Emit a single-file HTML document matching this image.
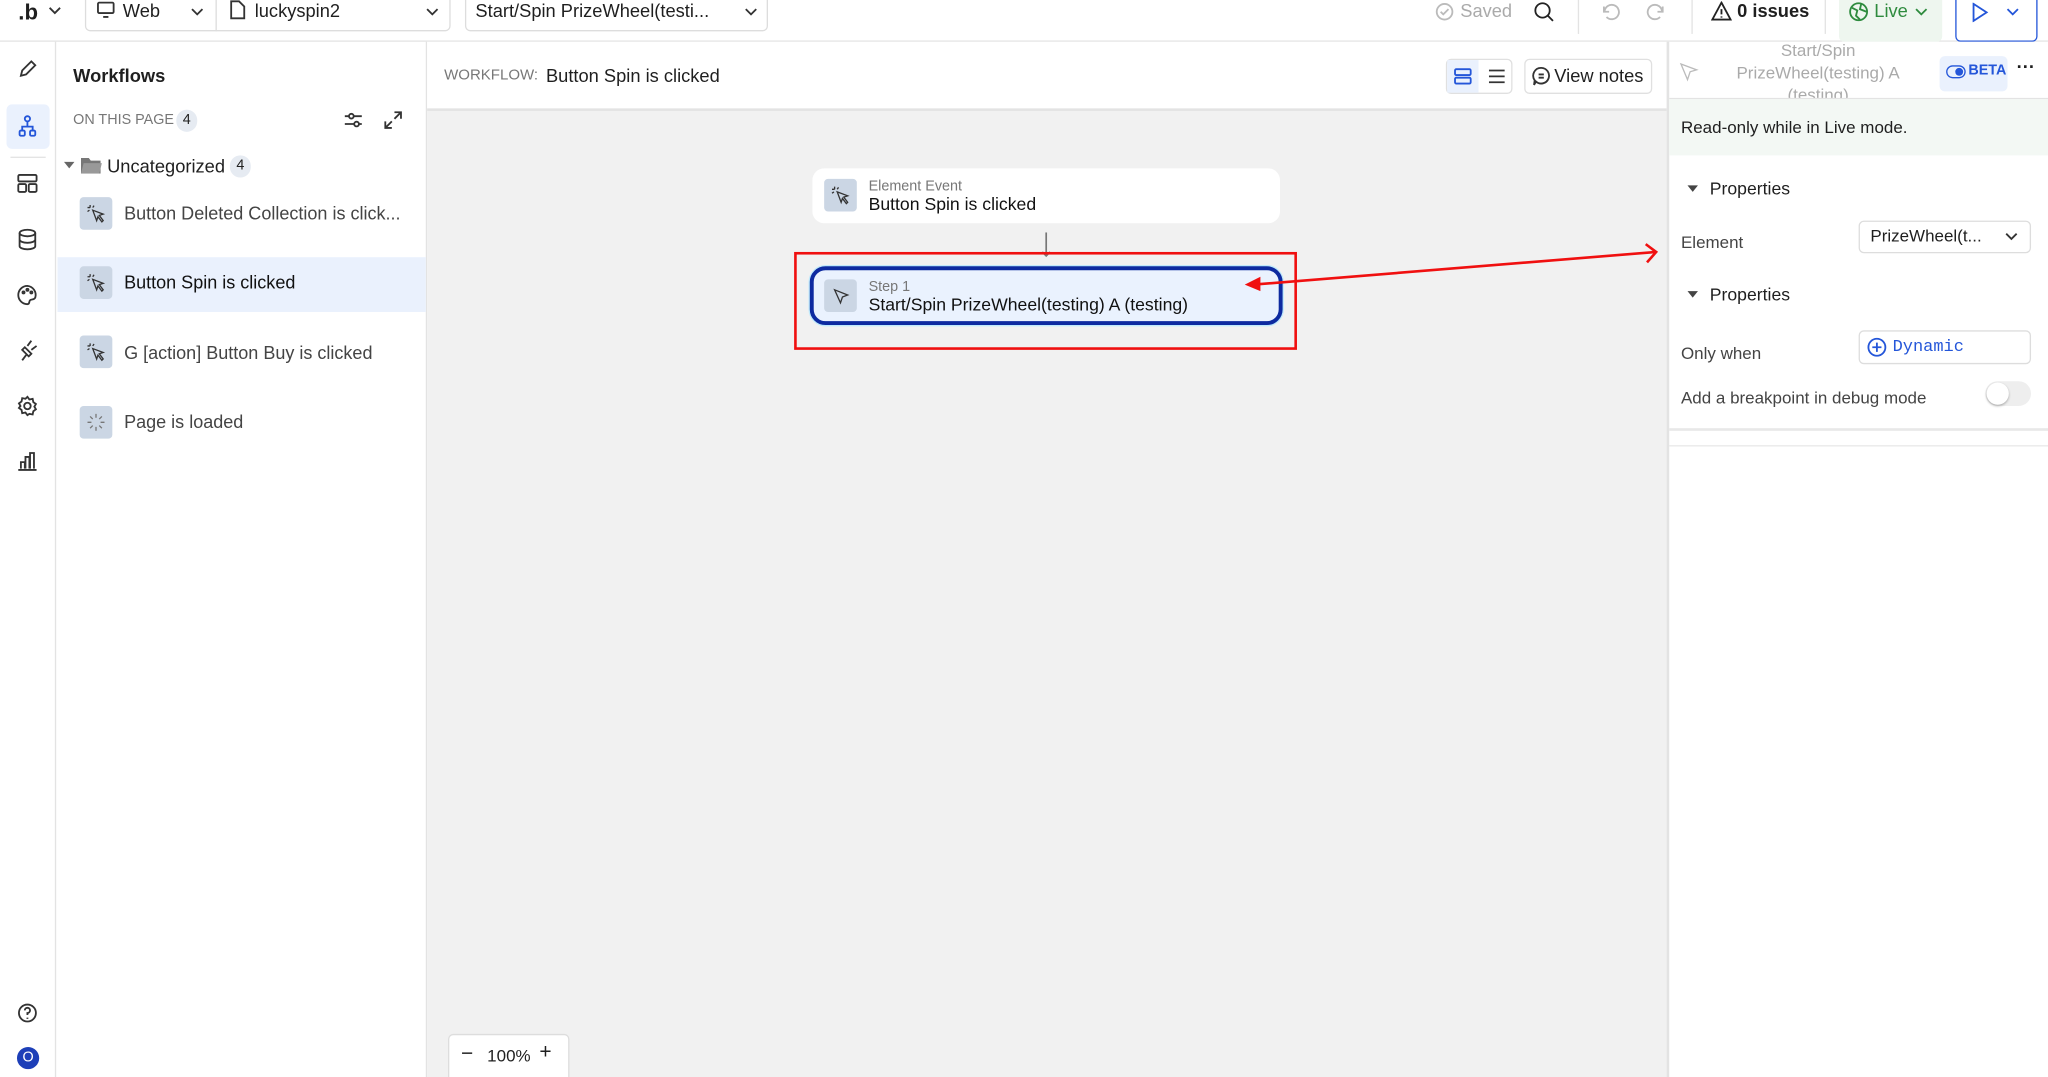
<!DOCTYPE html>
<html><head><meta charset="utf-8"><style>
*{box-sizing:border-box;margin:0;padding:0}
html,body{width:2048px;height:1077px;overflow:hidden;background:#fff}
#w{position:absolute;left:0;top:0;width:1568px;height:825px;overflow:hidden;transform:scale(1.30612,1.30545);transform-origin:0 0;font-family:"Liberation Sans",sans-serif;color:#1f1f1f;font-size:13px}
.a{position:absolute}
.ic{position:absolute;stroke:#333;fill:none;stroke-width:1.4}
.t{position:absolute;white-space:nowrap}
.sq{position:absolute;width:25px;height:25px;background:#cbd6e4;border-radius:3px}
</style></head><body><div id="w">
<!-- top bar -->
<div class="a" style="left:0;top:0;width:1568px;height:32px;background:#fff;border-bottom:1px solid #e3e3e3"></div>
<div class="t" style="left:14px;top:0;font-size:17px;font-weight:bold">.b</div>
<svg class="ic" style="left:37px;top:4px" width="10" height="8"><path d="M1 2l4 4 4-4"/></svg>
<div class="a" style="left:65px;top:-4px;width:280px;height:28px;border:1px solid #ddd;border-radius:4px"></div>
<div class="a" style="left:165px;top:-4px;width:1px;height:28px;background:#ddd"></div>
<svg class="ic" style="left:74px;top:1px" width="14" height="13"><rect x="1" y="1" width="12" height="8" rx="1"/><path d="M5 12h4"/></svg>
<div class="t" style="left:94px;top:0;font-size:14px">Web</div>
<svg class="ic" style="left:146px;top:5px" width="10" height="8"><path d="M1 2l4 4 4-4"/></svg>
<svg class="ic" style="left:176px;top:0" width="12" height="15"><path d="M1 1h6l4 4v9H1z"/></svg>
<div class="t" style="left:195px;top:0;font-size:14px">luckyspin2</div>
<svg class="ic" style="left:326px;top:5px" width="10" height="8"><path d="M1 2l4 4 4-4"/></svg>
<div class="a" style="left:356px;top:-4px;width:232px;height:28px;border:1px solid #ddd;border-radius:4px"></div>
<div class="t" style="left:364px;top:0;font-size:14px">Start/Spin PrizeWheel(testi...</div>
<svg class="ic" style="left:570px;top:5px" width="10" height="8"><path d="M1 2l4 4 4-4"/></svg>
<svg class="ic" style="left:1099px;top:2px;stroke:#bbb" width="14" height="14"><circle cx="7" cy="7" r="6"/><path d="M4 7l2 2 4-4"/></svg>
<div class="t" style="left:1118px;top:0;font-size:14px;color:#aaa">Saved</div>
<svg class="ic" style="left:1174px;top:1px;stroke:#222" width="16" height="16"><circle cx="7" cy="7" r="5.5"/><path d="M11 11l4 4"/></svg>
<div class="a" style="left:1208px;top:0;width:1px;height:26px;background:#e3e3e3"></div>
<svg class="ic" style="left:1225px;top:1px;stroke:#bbb" width="16" height="16"><path d="M3 4v4h4M3.5 8A5.5 5.5 0 1 1 5 12"/></svg>
<svg class="ic" style="left:1260px;top:1px;stroke:#bbb" width="16" height="16"><path d="M13 4v4H9M12.5 8A5.5 5.5 0 1 0 11 12"/></svg>
<div class="a" style="left:1295px;top:0;width:1px;height:26px;background:#e3e3e3"></div>
<svg class="ic" style="left:1310px;top:1px;stroke:#222" width="16" height="15"><path d="M8 1L15 14H1z M8 6v4 M8 11.5v1"/></svg>
<div class="t" style="left:1330px;top:0;font-size:14px;font-weight:bold">0 issues</div>
<div class="a" style="left:1397px;top:0;width:1px;height:26px;background:#e3e3e3"></div>
<div class="a" style="left:1408px;top:-4px;width:79px;height:36px;background:#eef6ef;border-radius:4px"></div>
<svg class="ic" style="left:1415px;top:1px;stroke:#2e8b3e" width="16" height="16"><circle cx="8" cy="8" r="6.5"/><path d="M3 5l4 2-1 4 3 3M10 2l-1 4 5 2"/></svg>
<div class="t" style="left:1435px;top:0;font-size:14px;color:#2e8b3e">Live</div>
<svg class="ic" style="left:1466px;top:5px;stroke:#2e8b3e" width="10" height="8"><path d="M1 2l4 4 4-4"/></svg>
<div class="a" style="left:1497px;top:-4px;width:63px;height:36px;border:1.5px solid #2456d9;border-radius:4px"></div>
<svg class="ic" style="left:1509px;top:2px;stroke:#2456d9" width="14" height="15"><path d="M2 1l10 6.5L2 14z"/></svg>
<svg class="ic" style="left:1536px;top:5px;stroke:#2456d9" width="10" height="8"><path d="M1 2l4 4 4-4"/></svg>
<!-- left rail -->
<div class="a" style="left:0;top:32px;width:43px;height:793px;border-right:1px solid #e3e3e3"></div>
<svg class="ic" style="left:13px;top:45px" width="16" height="16"><path d="M3 13l1-4 7-7 3 3-7 7z"/></svg>
<div class="a" style="left:5px;top:80px;width:33px;height:34px;background:#eaf1fd;border-radius:4px"></div>
<svg class="ic" style="left:13px;top:88px;stroke:#2456d9" width="16" height="18"><circle cx="8" cy="3" r="2"/><path d="M8 5v4M4 12V9h8v3"/><rect x="2" y="12" width="4" height="4" rx="1"/><rect x="10" y="12" width="4" height="4" rx="1"/></svg>
<div class="a" style="left:8px;top:120px;width:27px;height:1px;background:#e3e3e3"></div>
<svg class="ic" style="left:13px;top:132px" width="16" height="16"><rect x="1" y="2" width="14" height="5" rx="1"/><rect x="1" y="9" width="6" height="6" rx="1"/><rect x="9" y="9" width="6" height="6" rx="1"/></svg>
<svg class="ic" style="left:13px;top:175px" width="16" height="17"><ellipse cx="8" cy="3.5" rx="6" ry="2.5"/><path d="M2 3.5v10c0 1.4 2.7 2.5 6 2.5s6-1.1 6-2.5v-10M2 8.5c0 1.4 2.7 2.5 6 2.5s6-1.1 6-2.5"/></svg>
<svg class="ic" style="left:13px;top:218px" width="16" height="16"><path d="M8 1a7 7 0 0 0 0 14c2 0 1-2 2-3s3 0 4-2A7 7 0 0 0 8 1z"/><circle cx="5" cy="6" r=".8"/><circle cx="8" cy="4" r=".8"/><circle cx="11" cy="6" r=".8"/></svg>
<svg class="ic" style="left:13px;top:260px" width="16" height="17"><path d="M4 16l3-4M6 6l5 5-2 2-5-5zM8 5l3-4M11 8l4-3"/></svg>
<svg class="ic" style="left:13px;top:303px" width="16" height="16"><circle cx="8" cy="8" r="2.5"/><path d="M8 1l1.5 2 2.5-.5.5 2.5 2 1.5-1.2 2 1.2 2-2 1.5-.5 2.5-2.5-.5L8 15l-1.5-2-2.5.5-.5-2.5-2-1.5L2.7 8 1.5 6l2-1.5.5-2.5 2.5.5z"/></svg>
<svg class="ic" style="left:13px;top:345px" width="16" height="16"><path d="M1 15h14M3 14V9h3v5M6.5 14V5h3v9M10 14V2h3v12"/></svg>
<svg class="ic" style="left:13px;top:768px" width="16" height="16"><circle cx="8" cy="8" r="6.5"/><path d="M6 6a2 2 0 1 1 2 2v1.5M8 11.5v1"/></svg>
<div class="a" style="left:13px;top:802px;width:17px;height:17px;border-radius:50%;background:#1d3fb8;color:#fff;font-size:11px;text-align:center;line-height:17px">O</div>
<!-- sidebar -->
<div class="a" style="left:43px;top:32px;width:284px;height:793px;border-right:1px solid #e3e3e3"></div>
<div class="t" style="left:56px;top:50px;font-size:14px;font-weight:bold">Workflows</div>
<div class="t" style="left:56px;top:86px;font-size:11px;color:#777">ON THIS PAGE</div>
<div class="a" style="left:135px;top:84px;width:16px;height:17px;border-radius:8px;background:#e6ebf2;font-size:11px;text-align:center;line-height:17px">4</div>
<svg class="ic" style="left:263px;top:85px" width="15" height="14"><path d="M1 4h13M1 10h13"/><circle cx="6" cy="4" r="1.8" fill="#fff"/><circle cx="10" cy="10" r="1.8" fill="#fff"/></svg>
<svg class="ic" style="left:294px;top:85px" width="14" height="14"><path d="M8 1h5v5M13 1L8 6M6 13H1V8M1 13l5-5"/></svg>
<div class="a" style="left:49px;top:124px;width:0;height:0;border-left:4px solid transparent;border-right:4px solid transparent;border-top:5px solid #666"></div>
<svg class="a" style="left:62px;top:120px" width="16" height="13"><path d="M0 1h6l1.5 2H15v10H0z" fill="#777"/><path d="M2 5h14l-2 8H0z" fill="#999"/></svg>
<div class="t" style="left:82px;top:119px;font-size:14px">Uncategorized</div>
<div class="a" style="left:176px;top:119px;width:16px;height:17px;border-radius:8px;background:#e6ebf2;font-size:11px;text-align:center;line-height:17px">4</div>
<div class="a" style="left:44px;top:197px;width:282px;height:42px;background:#eaf1fd"></div>
<div class="sq" style="left:61px;top:151px"></div>
<div class="sq" style="left:61px;top:204px"></div>
<div class="sq" style="left:61px;top:257px"></div>
<div class="sq" style="left:61px;top:311px"></div>
<svg class="ic" style="left:66px;top:156px;stroke-width:1" width="15" height="15"><path d="M5 5l8 3-3 1 3 4-1 1-3-4-1 3z M3 1v2M1 3h2M6 1.5l-1 1.5M1 6l1.5-1"/></svg>
<svg class="ic" style="left:66px;top:209px;stroke-width:1" width="15" height="15"><path d="M5 5l8 3-3 1 3 4-1 1-3-4-1 3z M3 1v2M1 3h2M6 1.5l-1 1.5M1 6l1.5-1"/></svg>
<svg class="ic" style="left:66px;top:262px;stroke-width:1" width="15" height="15"><path d="M5 5l8 3-3 1 3 4-1 1-3-4-1 3z M3 1v2M1 3h2M6 1.5l-1 1.5M1 6l1.5-1"/></svg>
<svg class="ic" style="left:66px;top:316px;stroke-width:1;stroke:#777" width="15" height="15"><path d="M7.5 1v3M7.5 11v3M1 7.5h3M11 7.5h3M3 3l2 2M10 10l2 2M12 3l-2 2M3 12l2-2"/></svg>
<div class="t" style="left:95px;top:156px;font-size:13.8px;color:#444">Button Deleted Collection is click...</div>
<div class="t" style="left:95px;top:209px;font-size:13.8px;color:#111">Button Spin is clicked</div>
<div class="t" style="left:95px;top:263px;font-size:13.8px;color:#444">G [action] Button Buy is clicked</div>
<div class="t" style="left:95px;top:316px;font-size:13.8px;color:#444">Page is loaded</div>
<!-- main header -->
<div class="a" style="left:327px;top:32px;width:949px;height:53px;background:#fff;border-bottom:2px solid #e3e3e3"></div>
<div class="t" style="left:340px;top:52px;font-size:11.5px;color:#777">WORKFLOW:</div>
<div class="t" style="left:418px;top:50px;font-size:14px">Button Spin is clicked</div>
<div class="a" style="left:1107px;top:45px;width:51px;height:27px;border:1px solid #e0e0e0;border-radius:4px"></div>
<div class="a" style="left:1108px;top:46px;width:24px;height:25px;background:#eaf1fd"></div>
<svg class="ic" style="left:1113px;top:52px;stroke:#2456d9" width="14" height="13"><rect x="1" y="1" width="12" height="4.5" rx="1"/><rect x="1" y="7.5" width="12" height="4.5" rx="1"/></svg>
<svg class="ic" style="left:1139px;top:52px" width="14" height="13"><path d="M1 2h12M1 6.5h12M1 11h12"/></svg>
<div class="a" style="left:1167px;top:45px;width:98px;height:27px;border:1px solid #e0e0e0;border-radius:4px"></div>
<svg class="ic" style="left:1173px;top:51px" width="14" height="15"><path d="M7 1a6 6 0 1 1-4 10.5L1.5 14l.5-3.5A6 6 0 0 1 7 1zM5 6h4M5 8.5h4"/></svg>
<div class="t" style="left:1190px;top:50px;font-size:14px">View notes</div>
<!-- canvas -->
<div class="a" style="left:327px;top:85px;width:949px;height:740px;background:#f1f1f1"></div>
<div class="a" style="left:622px;top:129px;width:358px;height:42px;background:#fff;border-radius:9px"></div>
<div class="sq" style="left:631px;top:137px;width:25px;height:25px"></div>
<svg class="ic" style="left:636px;top:142px;stroke-width:1" width="15" height="15"><path d="M5 5l8 3-3 1 3 4-1 1-3-4-1 3z M3 1v2M1 3h2M6 1.5l-1 1.5M1 6l1.5-1"/></svg>
<div class="t" style="left:665px;top:137px;font-size:11px;color:#777">Element Event</div>
<div class="t" style="left:665px;top:149px;font-size:13.5px;color:#111">Button Spin is clicked</div>
<svg class="a" style="left:796px;top:178px" width="10" height="20"><path d="M5 0v18M2 15l3 3 3-3" stroke="#777" fill="none" stroke-width="1.3"/></svg>
<div class="a" style="left:619px;top:203px;width:364px;height:47px;border-radius:13px;background:#bfe9fb"></div>
<div class="a" style="left:620px;top:204px;width:362px;height:45px;border-radius:12px;background:#eaf2fe;border:3px solid #0d2aa0"></div>
<div class="sq" style="left:631px;top:214px"></div>
<svg class="ic" style="left:637px;top:220px;stroke-width:1" width="14" height="14"><path d="M2 2l10 4-4 1.5L6.5 12z"/></svg>
<div class="t" style="left:665px;top:214px;font-size:11px;color:#777">Step 1</div>
<div class="t" style="left:665px;top:226px;font-size:13.5px;color:#111">Start/Spin PrizeWheel(testing) A (testing)</div>
<div class="a" style="left:608px;top:193px;width:385px;height:75px;border:2px solid #f01010"></div>
<svg class="a" style="left:940px;top:180px" width="340" height="50"><path d="M20 38L328 13" stroke="#f01010" stroke-width="2" fill="none"/><path d="M13 38l12-6v11z" fill="#f01010"/><path d="M320 7l8 6-7 8" stroke="#f01010" stroke-width="2" fill="none"/></svg>
<div class="a" style="left:343px;top:792px;width:93px;height:40px;background:#fff;border:1px solid #ddd;border-radius:4px"></div>
<div class="t" style="left:353px;top:799px;font-size:16px">−</div>
<div class="t" style="left:373px;top:801px;font-size:13px">100%</div>
<div class="t" style="left:413px;top:798px;font-size:16px">+</div>
<!-- right panel -->
<div class="a" style="left:1276px;top:32px;width:292px;height:793px;background:#fff;border-left:2px solid #e3e3e3"></div>
<div class="a" style="left:1278px;top:32px;width:290px;height:44px;overflow:hidden;border-bottom:1px solid #e3e3e3">
<div class="a" style="left:0;top:-2px;width:228px;text-align:center;font-size:13px;color:#aaa;line-height:17px">Start/Spin<br>PrizeWheel(testing) A<br>(testing)</div></div>
<svg class="ic" style="left:1285px;top:47px;stroke:#bbb;stroke-width:1" width="16" height="16"><path d="M2 2l12 4.5-5 1.5-2 6z"/></svg>
<div class="a" style="left:1485px;top:43px;width:52px;height:27px;background:#eaf1fd;border-radius:4px"></div>
<div class="a" style="left:1490px;top:50px;width:15px;height:10px;border:1.5px solid #2456d9;border-radius:5px"></div>
<div class="a" style="left:1497px;top:52px;width:6px;height:6px;background:#2456d9;border-radius:3px"></div>
<div class="t" style="left:1507px;top:48px;font-size:11px;font-weight:bold;color:#2456d9">BETA</div>
<div class="t" style="left:1544px;top:43px;font-size:14px;font-weight:bold">···</div>
<div class="a" style="left:1278px;top:76px;width:290px;height:43px;background:#f3f8f4"></div>
<div class="t" style="left:1287px;top:90px;font-size:13px">Read-only while in Live mode.</div>
<div class="a" style="left:1292px;top:142px;border-left:4px solid transparent;border-right:4px solid transparent;border-top:5px solid #444"></div>
<div class="t" style="left:1309px;top:137px;font-size:13.5px">Properties</div>
<div class="t" style="left:1287px;top:178px;font-size:13px;color:#444">Element</div>
<div class="a" style="left:1423px;top:169px;width:132px;height:25px;border:1px solid #ddd;border-radius:4px"></div>
<div class="t" style="left:1432px;top:173px;font-size:13px">PrizeWheel(t...</div>
<svg class="ic" style="left:1535px;top:177px" width="10" height="8"><path d="M1 2l4 4 4-4"/></svg>
<div class="a" style="left:1292px;top:223px;border-left:4px solid transparent;border-right:4px solid transparent;border-top:5px solid #444"></div>
<div class="t" style="left:1309px;top:218px;font-size:13.5px">Properties</div>
<div class="t" style="left:1287px;top:263px;font-size:13px;color:#444">Only when</div>
<div class="a" style="left:1423px;top:253px;width:132px;height:26px;border:1px solid #ddd;border-radius:4px"></div>
<svg class="ic" style="left:1429px;top:258px;stroke:#2456d9" width="16" height="16"><circle cx="8" cy="8" r="6.5"/><path d="M8 4.5v7M4.5 8h7"/></svg>
<div class="t" style="left:1449px;top:258px;font-size:13px;color:#2456d9;font-family:'Liberation Mono',monospace">Dynamic</div>
<div class="t" style="left:1287px;top:297px;font-size:13px;color:#444">Add a breakpoint in debug mode</div>
<div class="a" style="left:1520px;top:292px;width:35px;height:19px;background:#eee;border-radius:10px"></div>
<div class="a" style="left:1521px;top:293px;width:17px;height:17px;background:#fff;border-radius:50%;box-shadow:0 1px 2px rgba(0,0,0,.3)"></div>
<div class="a" style="left:1278px;top:328px;width:290px;height:2px;background:#e8e8e8"></div>
<div class="a" style="left:1278px;top:341px;width:290px;height:1px;background:#e8e8e8"></div>
</div></body></html>
